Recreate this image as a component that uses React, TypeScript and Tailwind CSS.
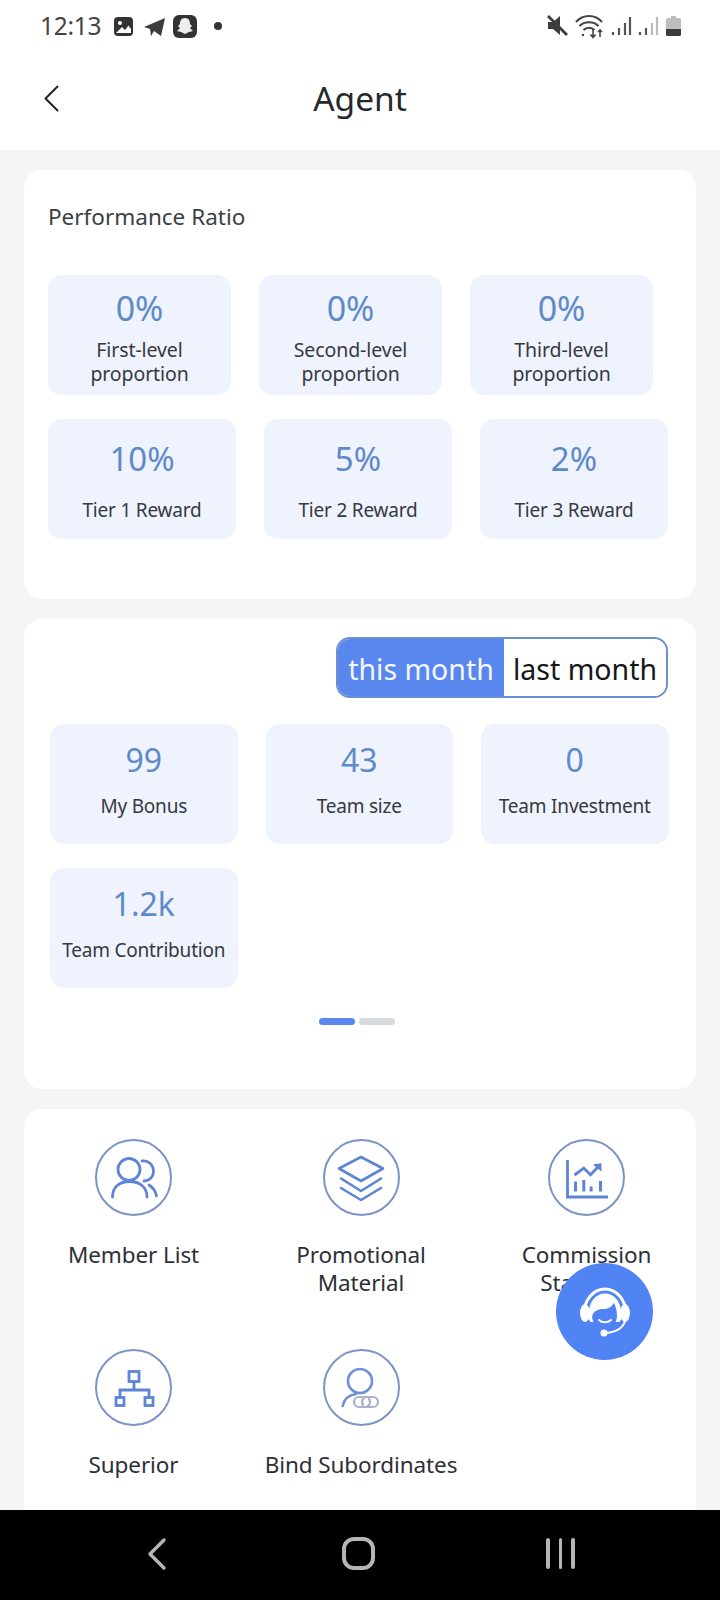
import type { ReactNode } from "react";

const font = "font-['Noto_Sans',sans-serif]";

type TileProps = {
  value: string;
  label: ReactNode;
  width: string;
  top: string;
  valueClass?: string;
  labelClass: string;
};

function Tile({ value, label, width, top, valueClass = "text-[32px]", labelClass }: TileProps) {
  return (
    <div className={`flex h-[120px] flex-col items-center rounded-[14px] bg-[#eff3fd] ${width} ${top}`}>
      <div className={`leading-[40px] text-[#5f8ac9] ${valueClass}`}>{value}</div>
      <div className={`whitespace-nowrap text-center leading-[24px] text-[#363940] ${labelClass}`}>{label}</div>
    </div>
  );
}

function MenuItem({ icon, label }: { icon: ReactNode; label: ReactNode }) {
  return (
    <div className="flex flex-col items-center">
      <div className="flex h-[77px] w-[77px] items-center justify-center rounded-full border-2 border-[#7c93c7]">
        {icon}
      </div>
      <div className="mt-[25px] whitespace-nowrap text-center text-[22.5px] leading-[28px] tracking-[-0.1px] text-[#2e3035]">{label}</div>
    </div>
  );
}

function MembersIcon() {
  return (
    <svg width="50" height="50" viewBox="0 0 50 50" fill="none" stroke="#5f84d6" strokeWidth="2.8" strokeLinecap="round">
      <circle cx="20" cy="16.500" r="11" />
      <path d="M3.500 44c0-10 7-15.500 17-15.500S38 34 38 44" />
      <path d="M33 8c6-1 11.500 3.500 11.500 10.500 0 5-4 9.500-9.500 9.500" />
      <path d="M40 32c4 2.500 6.500 6 7.500 11" />
    </svg>
  );
}

function LayersIcon() {
  return (
    <svg width="50" height="50" viewBox="0 0 50 50" fill="none" stroke="#5f84d6" strokeWidth="2.6" strokeLinejoin="round" strokeLinecap="round">
      <path d="M25 4 47 15.500 25 28 3 15.500Z" />
      <path d="M5 25.500 25 38 45 25.500" />
      <path d="M5 35 25 47 45 35" />
    </svg>
  );
}

function ChartIcon() {
  return (
    <svg width="46" height="46" viewBox="0 0 46 46" fill="none" stroke="#5f84d6" strokeWidth="2.8">
      <path d="M3.500 5v37h40.500" />
      <path d="M10.500 20 19.800 13.200 26.500 19.800 34 12" />
      <path d="M29.800 9.800 37 8.800V15.800Z" fill="#5f84d6" strokeWidth="1" />
      <path d="M11.500 26.500v10M19.800 25v11.500M27.100 31.500v5M36.500 26v10.500" strokeWidth="3" />
    </svg>
  );
}

function TreeIcon() {
  return (
    <svg width="44" height="44" viewBox="0 0 44 44" fill="none" stroke="#5f84d6" strokeWidth="2.8">
      <rect x="17" y="5.500" width="10" height="10" />
      <rect x="4" y="31.500" width="8" height="8" />
      <rect x="33" y="31.500" width="8" height="8" />
      <path d="M22 15.500v8.500M8 31.500V24h29v7.500" />
    </svg>
  );
}

function BindIcon() {
  return (
    <svg width="50" height="50" viewBox="0 0 50 50" fill="none" strokeLinecap="round">
      <circle cx="24" cy="18" r="12" stroke="#6f8fd8" strokeWidth="2.6" />
      <path d="M6.700 43C8 36 13 32 20 31" stroke="#6f8fd8" strokeWidth="2.6" />
      <path d="M30 34h-7a5 5 0 0 0 0 10h6a5 5 0 0 0 4-8" stroke="#a9b2c6" strokeWidth="2.200" />
      <path d="M30 44h7a5 5 0 0 0 0-10h-6a5 5 0 0 0-4 8" stroke="#a9b2c6" strokeWidth="2.200" />
    </svg>
  );
}

function HeadsetAgent() {
  return (
    <svg width="54" height="56" viewBox="0 0 54 56" fill="none">
      <path d="M6 30A21 25 0 0 1 48 30" stroke="#fff" strokeWidth="3" />
      <path d="M10.500 32C10.500 17 18 9.500 27 9.500S43.500 17 43.500 32c0 3-1 5-2 6h-29c-1-1-2-3-2-6Z" fill="#fff" />
      <ellipse cx="7" cy="29" rx="5" ry="9" fill="#fff" />
      <ellipse cx="47" cy="29" rx="5" ry="9" fill="#fff" />
      <path d="M14 33C15 27 20 25 26 25 31 25 34 22 36 19 39 25 39 30 39 33 38 41 33 45 27 45 20 45 15 40 14 33Z" fill="#5083f3" />
      <path d="M21 36c3 3 9 3 12 0" stroke="#fff" strokeWidth="2" strokeLinecap="round" />
      <path d="M47 37C45 44 38 48 28 49" stroke="#fff" strokeWidth="2" />
      <circle cx="26" cy="49" r="3.500" fill="#fff" />
    </svg>
  );
}

function NotifIcons() {
  return (
    <svg width="112" height="28" viewBox="0 0 112 28" fill="none">
      {/* gallery */}
      <rect x="0" y="5" width="19" height="19" rx="4" fill="#333" />
      <circle cx="6" cy="11" r="2" fill="#fff" />
      <path d="M2 21l6-6 3 3 3.500-4.500L17 17v4H2Z" fill="#fff" />
      {/* telegram */}
      <path d="M30 15 51 6l-4 18-7-5-3 5-1-7Z" fill="#3c3c3c" />
      {/* app badge */}
      <rect x="59" y="3" width="24" height="23" rx="6" fill="#333" />
      <path d="M71 6c4 0 5 3 5 6l2 2-2 2 3 3-4 1-4 2-4-2-4-1 3-3-2-2 2-2c0-3 1-6 5-6Z" fill="#eee" />
      {/* overflow dot */}
      <circle cx="104" cy="14" r="4" fill="#333" />
    </svg>
  );
}

function StatusIcons() {
  return (
    <svg width="136" height="28" viewBox="0 0 136 28" fill="none">
      {/* mute */}
      <path d="M1 10h5l7-6v19l-7-6H1Z" fill="#3c3c3c" />
      <path d="M1 4 20 23" stroke="#3c3c3c" strokeWidth="2.800" />
      {/* wifi with activity arrows */}
      <path d="M29 10c7-8 19-8 26 0M32.500 14c5-5 14-5 19 0M36.500 18c3-3 8-3 11 0" stroke="#444" strokeWidth="2" />
      <circle cx="36" cy="23" r="1.200" fill="#444" />
      <path d="M46 17v8M43.500 22.500l2.500 3 2.500-3M53 25v-7M51 20l2-2 2 2" stroke="#444" strokeWidth="1.600" />
      {/* signal bars */}
      <path d="M66 23v-3M72 23v-7M78 23V11M83 23V5" stroke="#555" strokeWidth="2.200" />
      <path d="M93 23v-3M99 23v-7" stroke="#555" strokeWidth="2.200" />
      <path d="M105 23V11M110 23V5" stroke="#bbb" strokeWidth="2.200" />
      {/* battery */}
      <rect x="124" y="4" width="5" height="3" fill="#bbb" />
      <path d="M119 8a2 2 0 0 1 2-2h11a2 2 0 0 1 2 2v9h-15Z" fill="#bdbdbd" />
      <path d="M119 17h15v5.500a1.500 1.500 0 0 1-1.500 1.500h-12a1.500 1.500 0 0 1-1.500-1.500Z" fill="#3c3c3c" />
    </svg>
  );
}

const rowOneLabel = "mt-[10px] text-[19.5px] tracking-[-0.1px]";
const rowTwoLabel = "mt-[19px] text-[19px] tracking-[-0.2px]";
const statLabel = "mt-[14px] text-[19px] tracking-[-0.2px]";

export default function App() {
  return (
    <div className={`relative flex h-[1600px] w-[720px] flex-col overflow-hidden bg-[#f5f5f5] ${font}`}>
      <header className="h-[150px] shrink-0 bg-white">
        <div className="flex h-[52px] items-center justify-between pl-[40px] pr-[37px]">
          <div className="flex items-center gap-[14px]">
            <span className="w-[60px] text-[24.5px] leading-none tracking-[-0.3px] text-[#444]">12:13</span>
            <NotifIcons />
          </div>
          <StatusIcons />
        </div>
        <div className="relative flex h-[98px] items-center justify-center pb-[4px]">
          <svg className="absolute left-[44px] top-[33px]" width="15" height="27" viewBox="0 0 15 27" fill="none">
            <path d="M13.500 1.500 1.500 13.500l12 12" stroke="#222" strokeWidth="2" strokeLinecap="round" strokeLinejoin="round" />
          </svg>
          <span className="text-[33.5px] leading-none text-[#26282c]">Agent</span>
        </div>
      </header>

      <main className="flex flex-1 flex-col gap-[20px] overflow-hidden px-[24px] pt-[20px]">
        <section className="h-[429px] shrink-0 rounded-[18px] bg-white pl-[24px] pt-[33px]">
          <h2 className="text-[22.500px] font-normal leading-[28px] text-[#3c3f45]">Performance Ratio</h2>
          <div className="mt-[44px] flex gap-[28px]">
            <Tile value="0%" width="w-[183px]" top="pt-[13px]" valueClass="text-[34px]" labelClass={rowOneLabel} label={<>First-level<br />proportion</>} />
            <Tile value="0%" width="w-[183px]" top="pt-[13px]" valueClass="text-[34px]" labelClass={rowOneLabel} label={<>Second-level<br />proportion</>} />
            <Tile value="0%" width="w-[183px]" top="pt-[13px]" valueClass="text-[34px]" labelClass={rowOneLabel} label={<>Third-level<br />proportion</>} />
          </div>
          <div className="mt-[24px] flex gap-[28px]">
            <Tile value="10%" width="w-[188px]" top="pt-[20px]" valueClass="text-[33px]" labelClass={rowTwoLabel} label="Tier 1 Reward" />
            <Tile value="5%" width="w-[188px]" top="pt-[20px]" valueClass="text-[33px]" labelClass={rowTwoLabel} label="Tier 2 Reward" />
            <Tile value="2%" width="w-[188px]" top="pt-[20px]" valueClass="text-[33px]" labelClass={rowTwoLabel} label="Tier 3 Reward" />
          </div>
        </section>

        <section className="flex h-[470px] shrink-0 flex-col rounded-[18px] bg-white pl-[26px] pr-[28px] pt-[18px]">
          <div className="flex h-[61px] justify-end">
            <div className="flex overflow-hidden rounded-[14px] border-2 border-[#6d8fd0] text-[28.5px] leading-none">
              <div className="flex w-[166px] items-center justify-center bg-[#5a87ee] pt-[3px] text-[#f4f7ff]">this month</div>
              <div className="flex w-[162px] items-center justify-center bg-white pt-[3px] text-[#15171a]">last month</div>
            </div>
          </div>
          <div className="mt-[26px] grid grid-cols-[187.5px_187.5px_187.5px] gap-x-[28px] gap-y-[24px]">
            <Tile value="99" width="w-full" top="pt-[16px]" labelClass={statLabel} label="My Bonus" />
            <Tile value="43" width="w-full" top="pt-[16px]" labelClass={statLabel} label="Team size" />
            <Tile value="0" width="w-full" top="pt-[16px]" labelClass={statLabel} label="Team Investment" />
            <Tile value="1.2k" width="w-full" top="pt-[16px]" labelClass={statLabel} label="Team Contribution" />
          </div>
          <div className="mt-[30px] flex justify-center gap-[4px] pr-[4px]">
            <span className="h-[7px] w-[36px] rounded-full bg-[#5a87ee]" />
            <span className="h-[7px] w-[36px] rounded-full bg-[#d9dade]" />
          </div>
        </section>

        <section className="h-[420px] shrink-0 rounded-[18px] bg-white pt-[30px]">
          <div className="grid grid-cols-[219px_236px_215px] gap-y-[42px]">
            <div className="h-[168px]"><MenuItem icon={<MembersIcon />} label="Member List" /></div>
            <div className="h-[168px]"><MenuItem icon={<LayersIcon />} label={<>Promotional<br />Material</>} /></div>
            <div className="h-[168px]"><MenuItem icon={<ChartIcon />} label={<>Commission<br />Statistics</>} /></div>
            <MenuItem icon={<TreeIcon />} label="Superior" />
            <MenuItem icon={<BindIcon />} label="Bind Subordinates" />
          </div>
        </section>
      </main>

      <nav className="flex h-[90px] shrink-0 items-center bg-black pb-[3px] pl-[146px]">
        <svg width="22" height="34" viewBox="0 0 22 34" fill="none">
          <path d="M18 3 4 17l14 14" stroke="#b5b5b5" strokeWidth="3.400" strokeLinecap="round" strokeLinejoin="round" />
        </svg>
        <div className="ml-[174px] h-[33px] w-[33px] rounded-[12px] border-[4px] border-[#b5b5b5]" />
        <div className="ml-[171px] flex gap-[9px]">
          <span className="h-[31px] w-[3.500px] rounded-full bg-[#b5b5b5]" />
          <span className="h-[31px] w-[3.500px] rounded-full bg-[#b5b5b5]" />
          <span className="h-[31px] w-[3.500px] rounded-full bg-[#b5b5b5]" />
        </div>
      </nav>

      {/* support button floats over the menu */}
      <button className="absolute left-[556px] top-[1263px] flex h-[97px] w-[97px] items-center justify-center rounded-full bg-[#5083f3]">
        <HeadsetAgent />
      </button>
    </div>
  );
}
